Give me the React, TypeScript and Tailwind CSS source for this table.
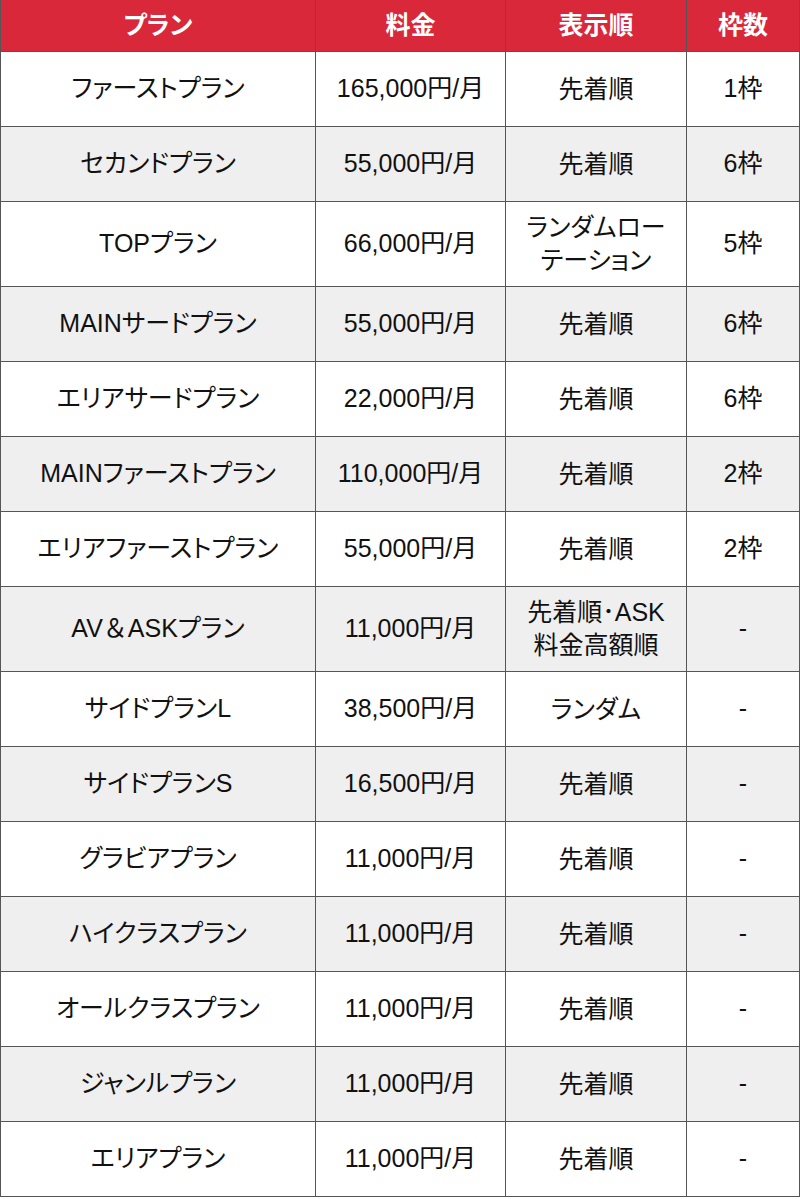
const rows: { plan: string; price: string; order: string[]; slots: string; tall?: boolean }[] = [
  { plan: "ファーストプラン", price: "165,000円/月", order: ["先着順"], slots: "1枠" },
  { plan: "セカンドプラン", price: "55,000円/月", order: ["先着順"], slots: "6枠" },
  { plan: "TOPプラン", price: "66,000円/月", order: ["ランダムロー", "テーション"], slots: "5枠", tall: true },
  { plan: "MAINサードプラン", price: "55,000円/月", order: ["先着順"], slots: "6枠" },
  { plan: "エリアサードプラン", price: "22,000円/月", order: ["先着順"], slots: "6枠" },
  { plan: "MAINファーストプラン", price: "110,000円/月", order: ["先着順"], slots: "2枠" },
  { plan: "エリアファーストプラン", price: "55,000円/月", order: ["先着順"], slots: "2枠" },
  { plan: "AV＆ASKプラン", price: "11,000円/月", order: ["先着順･ASK", "料金高額順"], slots: "-", tall: true },
  { plan: "サイドプランL", price: "38,500円/月", order: ["ランダム"], slots: "-" },
  { plan: "サイドプランS", price: "16,500円/月", order: ["先着順"], slots: "-" },
  { plan: "グラビアプラン", price: "11,000円/月", order: ["先着順"], slots: "-" },
  { plan: "ハイクラスプラン", price: "11,000円/月", order: ["先着順"], slots: "-" },
  { plan: "オールクラスプラン", price: "11,000円/月", order: ["先着順"], slots: "-" },
  { plan: "ジャンルプラン", price: "11,000円/月", order: ["先着順"], slots: "-" },
  { plan: "エリアプラン", price: "11,000円/月", order: ["先着順"], slots: "-" },
];

const cell = "flex items-center justify-center text-center border-r border-[#555555]";

// full-width ＆ keeps its full width (no proportional kerning)
function PlanName({ name }: { name: string }) {
  const parts = name.split("＆");
  if (parts.length === 1) return <>{name}</>;
  return (
    <>
      {parts[0]}
      <span className="[font-feature-settings:normal]">＆</span>
      {parts[1]}
    </>
  );
}

export default function App() {
  return (
    <div className="w-[800px] bg-white text-[25px] text-[#111111] font-['Liberation_Sans','Noto_Sans_CJK_JP',sans-serif] [font-feature-settings:'palt']">
      <div className="border-l border-[#555555]">
        <div className="flex h-[52px] bg-[#d9283a] font-bold text-white border-b border-[#555555]">
          <div className={`${cell} w-[315px]`}>プラン</div>
          <div className={`${cell} w-[190px]`}>料金</div>
          <div className={`${cell} w-[181px]`}>表示順</div>
          <div className={`${cell} w-[113px]`}>枠数</div>
        </div>
        {rows.map((r, i) => (
          <div
            key={r.plan}
            className={`flex border-b border-[#555555] ${r.tall ? "h-[85px]" : "h-[75px]"} ${
              i % 2 === 1 ? "bg-[#efefef]" : "bg-white"
            }`}
          >
            <div className={`${cell} w-[315px]`}>
              <PlanName name={r.plan} />
            </div>
            <div className={`${cell} w-[190px]`}>{r.price}</div>
            <div className={`${cell} w-[181px] flex-col leading-[33px]`}>
              {r.order.map((o) => (
                <span key={o}>{o}</span>
              ))}
            </div>
            <div className={`${cell} w-[113px]`}>{r.slots}</div>
          </div>
        ))}
      </div>
    </div>
  );
}
